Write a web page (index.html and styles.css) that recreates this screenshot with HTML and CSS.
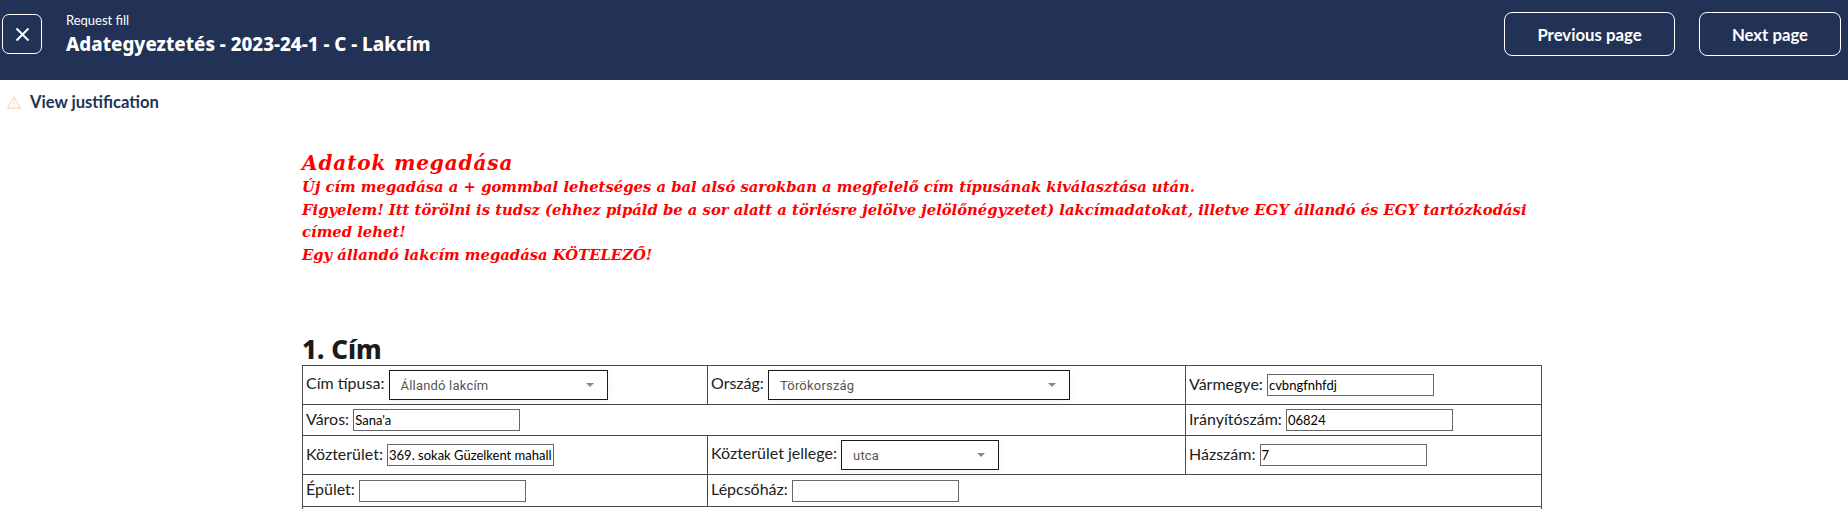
FILE: index.html
```html
<!DOCTYPE html>
<html lang="hu">
<head>
<meta charset="utf-8">
<title>Request fill</title>
<link rel="stylesheet" href="styles.css">
</head>
<body>
<header class="topbar">
  <button class="close-btn" aria-label="Close">
    <svg width="15" height="15" viewBox="0 0 15 15"><path d="M1.5 1.5 L13.5 13.5 M13.5 1.5 L1.5 13.5" stroke="#fff" stroke-width="2" fill="none"/></svg>
  </button>
  <div class="titles">
    <div class="eyebrow">Request fill</div>
    <div class="title">Adategyeztetés - 2023-24-1 - C - Lakcím</div>
  </div>
  <div class="actions">
    <button class="page-btn prev">Previous page</button>
    <button class="page-btn next">Next page</button>
  </div>
</header>
<div class="justify">
  <svg width="14" height="13" viewBox="0 0 14 13"><path d="M7 .8 L13.4 12.2 H.6 Z" fill="none" stroke="#f8cfae" stroke-width="1" stroke-linejoin="round"/><path d="M7 4.5 V8.5 M7 9.8 V11" stroke="#f8cfae" stroke-width="1" fill="none"/></svg>
  <span>View justification</span>
</div>
<main class="content">
  <div class="notice">
    <div class="notice-title">Adatok megadása</div>
    <div>Új cím megadása a + gommbal lehetséges a bal alsó sarokban a megfelelő cím típusának kiválasztása után.</div>
    <div>Figyelem! Itt törölni is tudsz (ehhez pipáld be a sor alatt a törlésre jelölve jelölőnégyzetet) lakcímadatokat, illetve EGY állandó és EGY tartózkodási címed lehet!</div>
    <div>Egy állandó lakcím megadása KÖTELEZŐ!</div>
  </div>
  <h2 class="section">1. Cím</h2>
  <table class="form">
    <colgroup><col class="c1"><col class="c2"><col class="c3"></colgroup>
    <tr class="r1">
      <td>Cím típusa: <span class="select s1"><span>Állandó lakcím</span><i class="caret"></i></span></td>
      <td>Ország: <span class="select s2"><span>Törökország</span><i class="caret"></i></span></td>
      <td>Vármegye: <input class="field" value="cvbngfnhfdj"></td>
    </tr>
    <tr class="r2">
      <td colspan="2">Város: <input class="field" value="Sana'a"></td>
      <td>Irányítószám: <input class="field" value="06824"></td>
    </tr>
    <tr class="r3">
      <td>Közterület: <input class="field" value="369. sokak Güzelkent mahalle"></td>
      <td>Közterület jellege: <span class="select s3"><span>utca</span><i class="caret"></i></span></td>
      <td>Házszám: <input class="field" value="7"></td>
    </tr>
    <tr class="r4">
      <td>Épület: <input class="field"></td>
      <td colspan="2">Lépcsőház: <input class="field"></td>
    </tr>
    <tr class="r5"><td colspan="3"></td></tr>
  </table>
</main>
</body>
</html>
```
FILE: styles.css
```css
* { box-sizing: border-box; }
html, body { margin: 0; padding: 0; height: 509px; overflow: hidden; background: #fff; }
body { font-family: Lato, sans-serif; color: #212121; }
.topbar { height: 80px; background: #223256; display: flex; align-items: flex-start; color: #fff; }
.close-btn { width: 40px; height: 40px; margin: 14px 0 0 2px; background: transparent; border: 1px solid #fff; border-radius: 7px; display: flex; align-items: center; justify-content: center; padding: 0; }
.titles { margin: 12px 0 0 24px; }
.eyebrow { font-size: 13px; line-height: 16px; }
.title { font-family: "Noto Sans", sans-serif; font-weight: 800; font-size: 18.75px; line-height: 26px; margin-top: 3px; }
.actions { margin-left: auto; display: flex; gap: 24px; padding: 12px 7px 0 0; }
.page-btn { height: 44px; background: transparent; border: 1px solid #fff; border-radius: 8px; color: #fff; font-family: Lato, sans-serif; font-weight: 700; font-size: 16.75px; padding: 0; }
.prev { width: 171px; }
.next { width: 142px; }
.justify { display: flex; align-items: center; gap: 9px; height: 44px; padding: 0 0 0 7px; font-weight: 700; font-size: 16.6px; color: #223256; }
.content { padding: 27px 0 0 302px; }
.notice { width: 1240px; color: #f00; font-family: "DejaVu Serif", serif; font-weight: 700; font-style: italic; font-size: 14.8px; line-height: 22.5px; }
.notice-title { font-size: 20px; letter-spacing: 0.9px; line-height: 25px; }
.section { font-family: "Noto Sans", sans-serif; font-weight: 800; font-size: 26px; line-height: 32px; margin: 67px 0 0; color: #1b1b1b; }
.form { border-collapse: collapse; width: 1240px; table-layout: fixed; font-size: 16px; }
.c1 { width: 405px; }
.c2 { width: 478px; }
.form td { border: 1px solid #4a4a4a; padding: 0 4px 0 3px; vertical-align: middle; }
.r1 { height: 39px; }
.r2 { height: 31px; }
.r3 { height: 39px; }
.r4 { height: 32px; }
.r5 { height: 2px; }
.form .r5 td { border-bottom: 0; padding: 0; }
.field { width: 167px; height: 22px; border: 1px solid #666; padding: 1px; font-family: Lato, sans-serif; font-size: 13px; color: #000; vertical-align: middle; border-radius: 0; background: #fff; outline: 0; }
.select { display: inline-flex; align-items: center; justify-content: space-between; height: 30px; border: 1px solid #1a1a1a; padding: 0 13px 0 11px; font-family: Roboto, sans-serif; font-size: 13px; letter-spacing: 0.2px; color: #555; vertical-align: middle; background: #fff; box-shadow: 0 2px 8px rgba(0,0,0,0.06); }
.s1 { width: 219px; }
.s2 { width: 302px; }
.s3 { width: 158px; }
.caret { width: 0; height: 0; border-left: 4px solid transparent; border-right: 4px solid transparent; border-top: 4px solid #888; }
```
